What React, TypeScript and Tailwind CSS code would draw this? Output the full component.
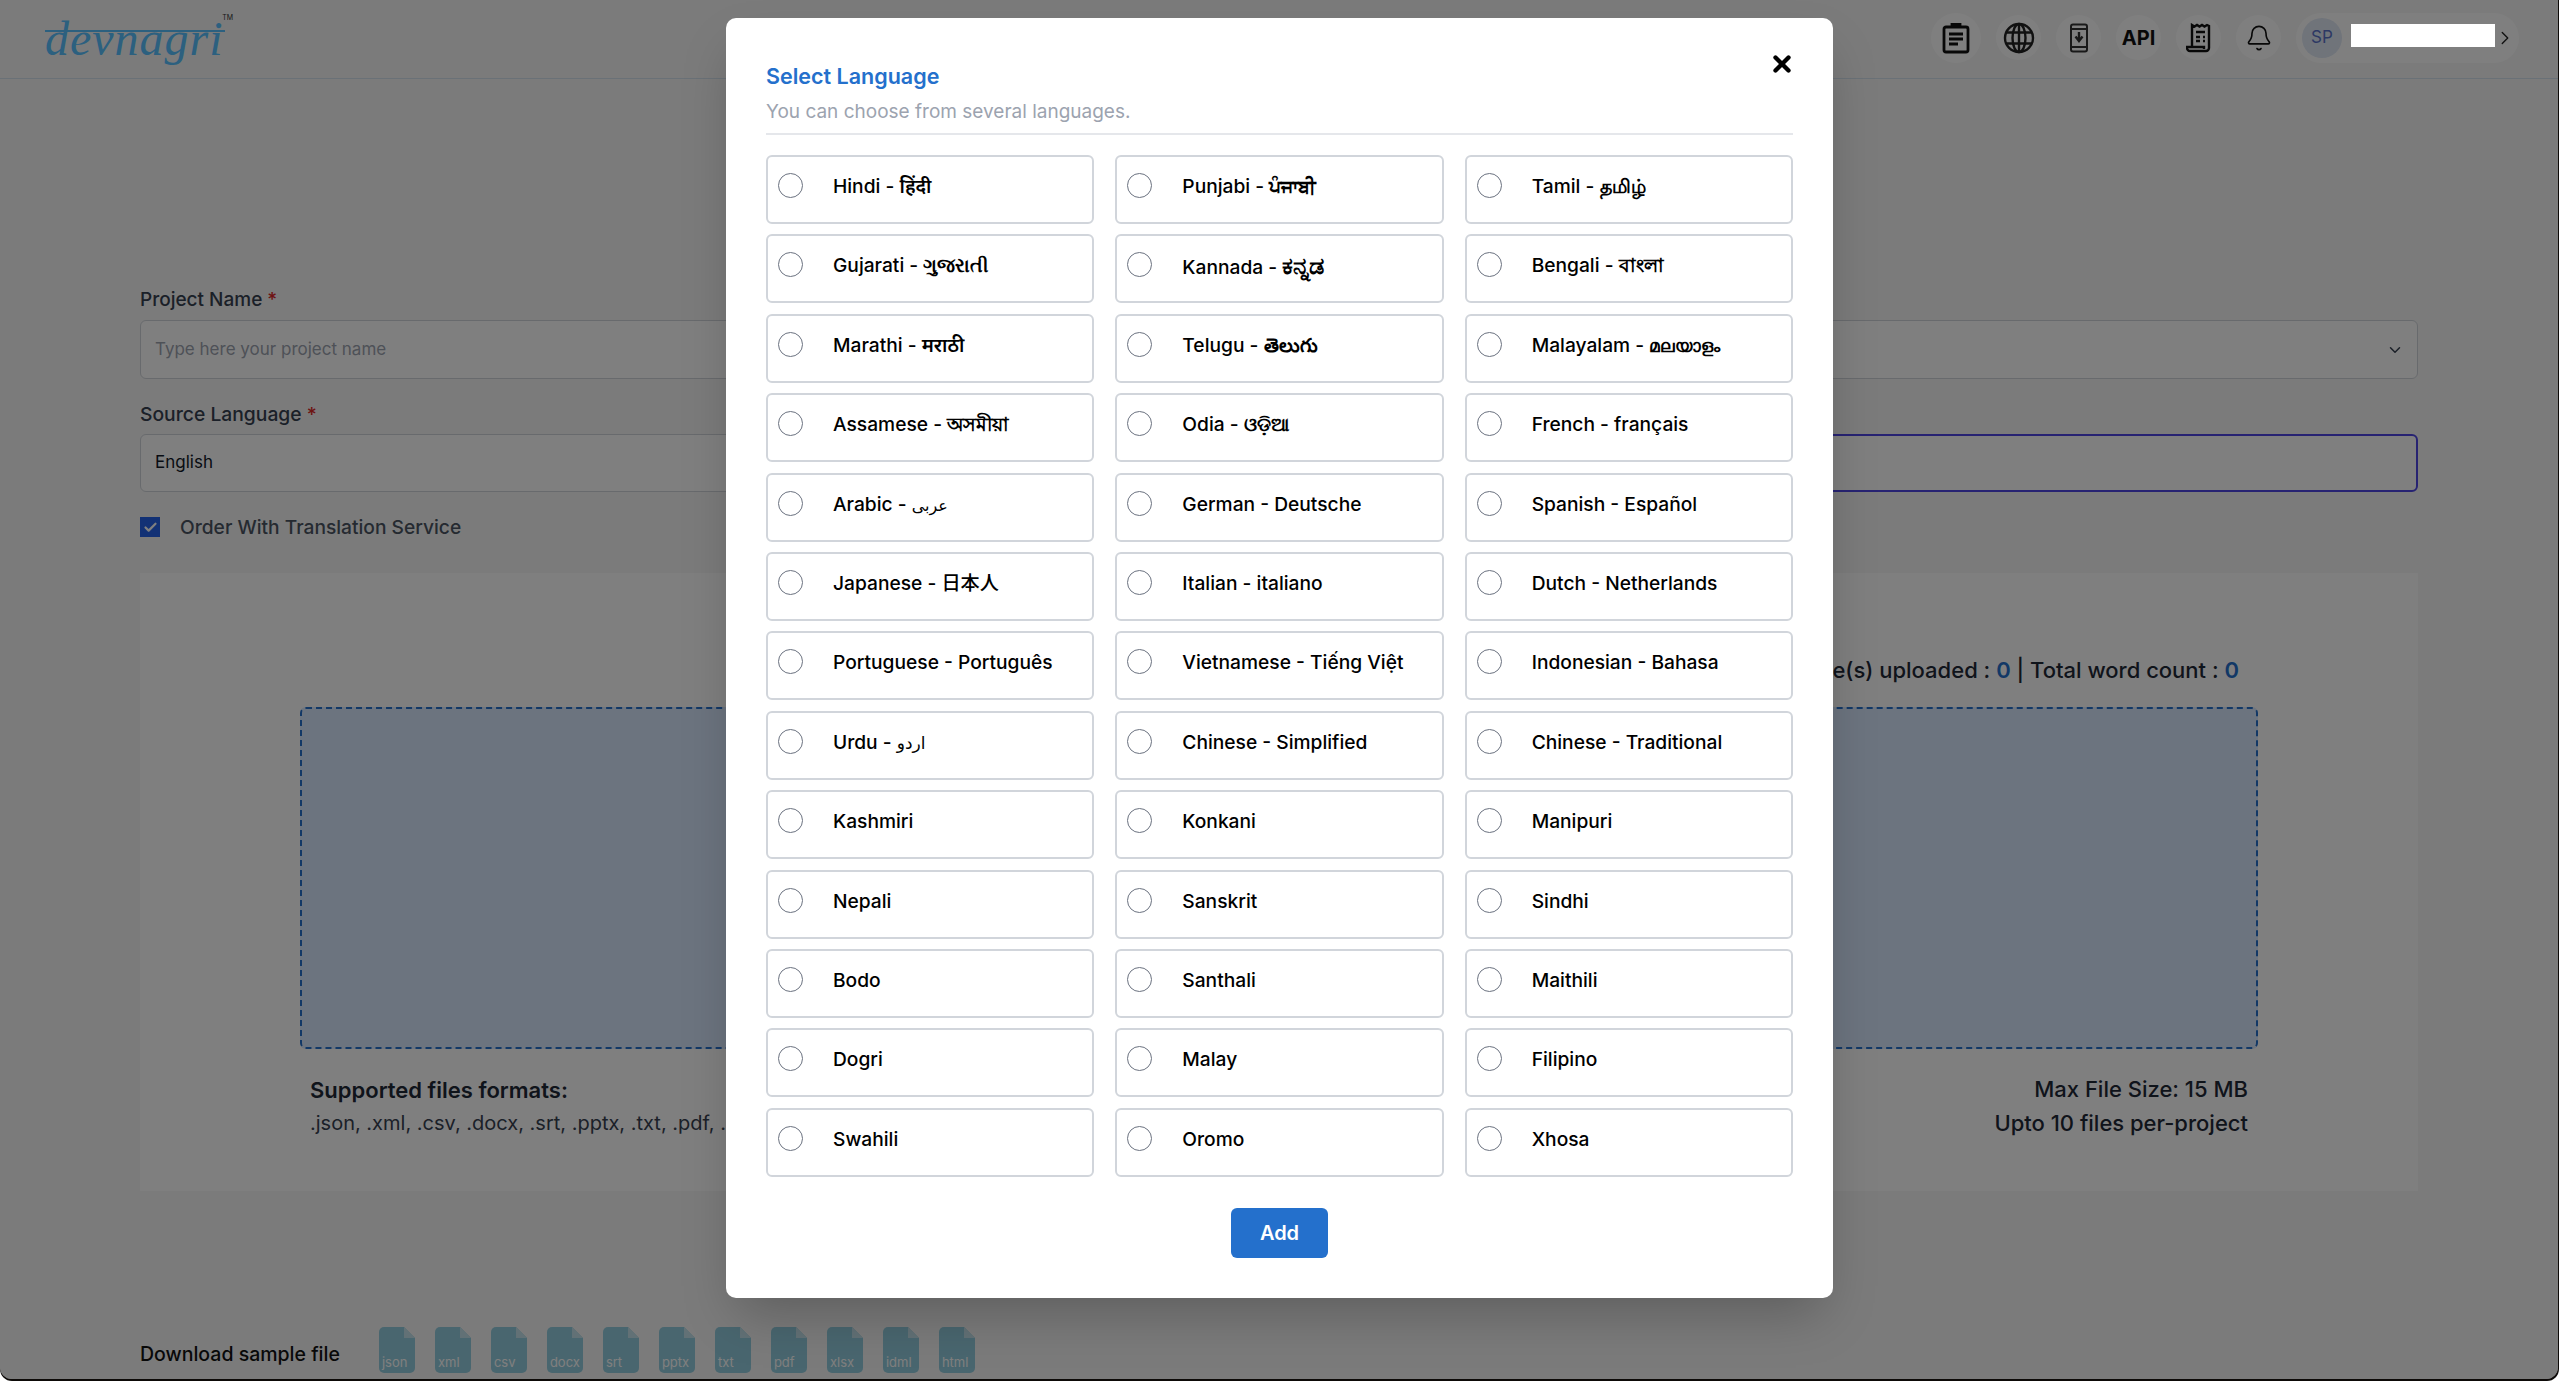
import React from 'react';
import { Bell, Check, ChevronDown, ChevronRight, X } from 'lucide-react';

const languages = [
  'Hindi - हिंदी', 'Punjabi - ਪੰਜਾਬੀ', 'Tamil - தமிழ்',
  'Gujarati - ગુજરાતી', 'Kannada - ಕನ್ನಡ', 'Bengali - বাংলা',
  'Marathi - मराठी', 'Telugu - తెలుగు', 'Malayalam - മലയാളം',
  'Assamese - অসমীয়া', 'Odia - ଓଡ଼ିଆ', 'French - français',
  'Arabic - عربى', 'German - Deutsche', 'Spanish - Español',
  'Japanese - 日本人', 'Italian - italiano', 'Dutch - Netherlands',
  'Portuguese - Português', 'Vietnamese - Tiếng Việt', 'Indonesian - Bahasa',
  'Urdu - اردو', 'Chinese - Simplified', 'Chinese - Traditional',
  'Kashmiri', 'Konkani', 'Manipuri',
  'Nepali', 'Sanskrit', 'Sindhi',
  'Bodo', 'Santhali', 'Maithili',
  'Dogri', 'Malay', 'Filipino',
  'Swahili', 'Oromo', 'Xhosa',
];

// native names that need their own weight or size to sit like the Latin text
const nativeClass: Record<string, string> = {
  'हिंदी': 'font-semibold',
  'ਪੰਜਾਬੀ': 'font-semibold',
  'தமிழ்': 'font-semibold',
  'ગુજરાતી': 'font-semibold',
  'ಕನ್ನಡ': 'font-semibold text-[24px]',
  'বাংলা': 'font-semibold',
  'मराठी': 'font-semibold',
  'తెలుగు': 'font-semibold',
  'മലയാളം': 'font-semibold text-[17px]',
  'অসমীয়া': 'font-semibold',
  'ଓଡ଼ିଆ': 'font-semibold',
  'عربى': 'text-[16px]',
  'اردو': 'text-[17px]',
};

const sampleFiles = ['json', 'xml', 'csv', 'docx', 'srt', 'pptx', 'txt', 'pdf', 'xlsx', 'idml', 'html'];

const fontStack = { fontFamily: 'Inter, "Noto Sans", "DejaVu Sans", "Noto Sans CJK JP", sans-serif' };

const HeaderCircle = ({ children, big }: { children: React.ReactNode; big?: boolean }) => (
  <div className={`flex items-center justify-center rounded-full bg-[#ffffff] ${big ? 'w-[50px] h-[50px]' : 'w-[45px] h-[45px]'}`}>
    {children}
  </div>
);

const FileIcon = ({ label }: { label: string }) => (
  <div className="relative w-[36px] h-[46px]">
    <svg width="36" height="46" viewBox="0 0 36 46" className="absolute inset-0">
      <path d="M5 0H25L36 11V41a5 5 0 0 1-5 5H5a5 5 0 0 1-5-5V5a5 5 0 0 1 5-5Z" fill="#93cdde" />
      <path d="M25 0L36 11H25Z" fill="#c5e3ec" />
    </svg>
    <span className="absolute left-[3px] bottom-[3px] text-[13px] leading-[16px] text-white">{label}</span>
  </div>
);

const LanguageName = ({ lang }: { lang: string }) => {
  const [name, native] = lang.split(' - ');
  if (!native) return <>{name}</>;
  return <>{name} - <span className={nativeClass[native] || ''}>{native}</span></>;
};

const App: React.FC = () => {
  return (
    <div className="w-[2563px] h-[1390px] bg-white overflow-hidden" style={fontStack}>
      <div className="w-[2559px] h-[1381px] bg-[#0d0a08] rounded-b-xl">
        <div className="relative w-[2558px] h-[1379px] bg-[#f7f7f7] rounded-b-xl overflow-hidden">
          {/* Header */}
          <header className="flex items-center justify-between h-[79px] border-b border-[#d5e3ee] pl-[45px] pr-[39px]">
            <div className="relative w-[180px] h-[60px]">
              <span className="block text-[48px] leading-[60px] italic tracking-[1px] text-[#58c0ff]" style={{ fontFamily: '"Liberation Serif", serif' }}>devnagri</span>
              <div className="absolute left-0 right-0 top-[21px] h-[2px] bg-[#58c0ff]" />
              <span className="absolute right-[-8px] top-[5px] text-[7px] leading-[8px] text-[#333]">TM</span>
            </div>
            <div className="flex items-center gap-[15px] pb-[3px]">
              <HeaderCircle big>
                <svg width="28" height="32" viewBox="0 0 28 32" fill="none" stroke="#111" strokeWidth="2.8">
                  <rect x="2" y="5" width="24" height="25" rx="2" />
                  <path d="M10 5V2.5h8V5" />
                  <path d="M7 12h14M7 17h14M7 22h9" />
                </svg>
              </HeaderCircle>
              <HeaderCircle>
                <svg width="32" height="32" viewBox="0 0 32 32" fill="none" stroke="#222" strokeWidth="2.4">
                  <circle cx="16" cy="16" r="14" />
                  <ellipse cx="16" cy="16" rx="6.5" ry="14" />
                  <path d="M16 2v28M3.5 10.5h25M3.5 21.5h25" />
                </svg>
              </HeaderCircle>
              <HeaderCircle>
                <svg width="20" height="30" viewBox="0 0 20 30" fill="none" stroke="#333" strokeWidth="2">
                  <rect x="2" y="1.5" width="16" height="27" rx="2" />
                  <path d="M2 6h16M2 24h16" />
                  <path d="M10 9v8M6.5 13.5L10 18l3.5-4.5" strokeWidth="2.4" />
                </svg>
              </HeaderCircle>
              <HeaderCircle><span className="text-[20px] font-bold text-[#111]">API</span></HeaderCircle>
              <HeaderCircle>
                <svg width="26" height="30" viewBox="0 0 26 30" fill="none" stroke="#111" strokeWidth="2.4">
                  <path d="M6 24V2l2.5 1.5L11 2l2.5 1.5L16 2l2.5 1.5L21 2l2 1v22a3 3 0 0 1-3 3H4a3 3 0 0 1-3-3v-1h17v2" />
                  <path d="M10 9h9M10 14h4M17 14h2M10 18h4M17 18h2" />
                </svg>
              </HeaderCircle>
              <HeaderCircle><Bell size={28} strokeWidth={1.4} color="#111" /></HeaderCircle>
              <div className="flex items-center w-[223px] h-[50px] rounded-full bg-[#ffffff] pl-[6px]">
                <div className="flex items-center justify-center w-[40px] h-[40px] rounded-full bg-[#e0e8f5] text-[17px] text-[#5a73c9]">SP</div>
                <div className="ml-[8px] w-[144px] h-[23px]" />
                <ChevronRight size={22} strokeWidth={1.5} color="#222" />
              </div>
            </div>
          </header>

          {/* Form behind the dialog */}
          <main className="px-[140px] pt-[209px]">
            <div className="grid grid-cols-2 gap-x-[40px] gap-y-[23px]">
              <div>
                <label className="block text-[19px] leading-[24px] font-medium text-[#374151] mb-[8px]">Project Name <span className="text-[#dc2626]">*</span></label>
                <div className="flex items-center h-[59px] border border-[#d1d5db] rounded-md bg-white px-[14px] text-[17px] text-[#9ca3af]">Type here your project name</div>
              </div>
              <div>
                <label className="block text-[19px] leading-[24px] font-medium text-[#374151] mb-[8px]">Domain <span className="text-[#dc2626]">*</span></label>
                <div className="flex items-center justify-end h-[59px] border border-[#d1d5db] rounded-md bg-white px-[13px]">
                  <ChevronDown size={18} color="#374151" />
                </div>
              </div>
              <div>
                <label className="block text-[19.3px] leading-[24px] font-medium text-[#374151] mb-[8px]">Source Language <span className="text-[#dc2626]">*</span></label>
                <div className="flex items-center h-[58px] border border-[#d1d5db] rounded-md bg-white px-[14px] text-[17px] text-[#111827]">English</div>
              </div>
              <div>
                <label className="block text-[19.3px] leading-[24px] font-medium text-[#374151] mb-[8px]">Target Language <span className="text-[#dc2626]">*</span></label>
                <div className="h-[58px] border-2 border-[#4f46e5] rounded-md bg-white" />
              </div>
            </div>

            <div className="flex items-center gap-[20px] mt-[21px]">
              <div className="flex items-center justify-center w-[20px] h-[20px] bg-[#2563eb]">
                <Check size={15} strokeWidth={3.5} color="white" />
              </div>
              <span className="text-[19.2px] font-medium text-[#4b5563]">Order With Translation Service</span>
            </div>

            <section className="bg-white mt-[31px] h-[618px] px-[160px] pt-[83px]">
              <div className="text-right pr-[19px] text-[22px] leading-[28px] font-medium text-[#1f2937] whitespace-nowrap">
                File(s) uploaded : <span className="font-semibold text-[#2470cc]">0</span> | Total word count : <span className="font-semibold text-[#2470cc]">0</span>
              </div>
              <div className="h-[342px] mt-[23px] border-2 border-dashed border-[#2470cc] rounded-md bg-[#d9e8ff]" />
              <div className="flex justify-between px-[10px] mt-[25px]">
                <div>
                  <div className="text-[22px] leading-[32px] font-semibold text-[#1f2937]">Supported files formats:</div>
                  <div className="text-[20px] leading-[32px] text-[#374151] mt-[1px]">.json, .xml, .csv, .docx, .srt, .pptx, .txt, .pdf, .xlsx, .idml, .html</div>
                </div>
                <div className="text-right text-[22px] leading-[34px] font-medium text-[#1f2937] -mt-[2px]">
                  <div>Max File Size: 15 MB</div>
                  <div>Upto 10 files per-project</div>
                </div>
              </div>
            </section>

            <div className="flex items-end mt-[136px]">
              <span className="text-[19.5px] leading-[28px] font-medium text-[#111] mb-[5px]">Download sample file</span>
              <div className="flex gap-[20px] ml-[39px]">
                {sampleFiles.map(f => <FileIcon key={f} label={f} />)}
              </div>
            </div>
          </main>

          {/* Overlay */}
          <div className="absolute inset-0 bg-black/50" />

          {/* Redacted account name sits above the overlay */}
          <div className="absolute left-[2351px] top-[24px] w-[144px] h-[23px] bg-white" />

          {/* Dialog */}
          <div className="absolute left-[726px] top-[18px] w-[1107px] h-[1280px] rounded-[10px] bg-white px-[40px] pt-[42px] shadow-2xl">
            <button className="absolute right-[38px] top-[33px]"><X size={26} strokeWidth={4} color="#000" /></button>
            <h3 className="text-[21.5px] leading-[32px] font-semibold text-[#2470cc]">Select Language</h3>
            <p className="text-[19px] leading-[28px] text-[#9ca3af] mt-[6px]">You can choose from several languages.</p>
            <div className="h-[2px] bg-[#e5e7eb] mt-[7px] mb-[20px]" />
            <div className="grid grid-cols-3 gap-x-[21px] gap-y-[10.4px]">
              {languages.map(lang => (
                <label key={lang} className="flex items-start h-[69px] border-2 border-[#d1d5db] rounded-md pl-[10px] pt-[16px]">
                  <span className="w-[25px] h-[25px] rounded-full border border-[#6b7280] bg-white shrink-0" />
                  <span className="ml-[30px] mt-[1px] text-[19.2px] leading-[25px] font-medium text-black whitespace-nowrap"><LanguageName lang={lang} /></span>
                </label>
              ))}
            </div>
            <div className="flex justify-center mt-[31px]">
              <button className="w-[97px] h-[50px] rounded-md bg-[#2470cc] text-white text-[20px] font-semibold">Add</button>
            </div>
          </div>
        </div>
      </div>
    </div>
  );
};

export default App;
